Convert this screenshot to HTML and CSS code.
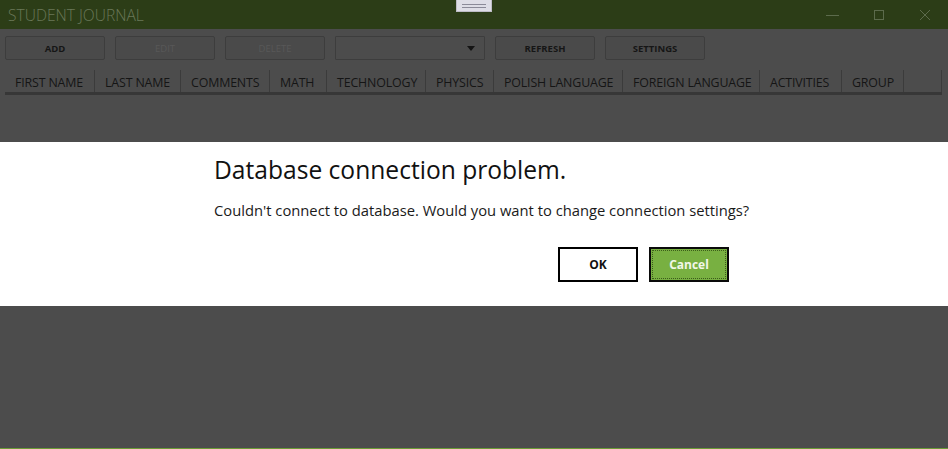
FILE: index.html
```html
<!DOCTYPE html>
<html>
<head>
<meta charset="utf-8">
<link rel="stylesheet" href="styles.css">
</head>
<body>
<div class="app">
  <div class="titlebar">
    <span class="title">STUDENT JOURNAL</span>
    <div class="controls">
      <span class="ctl"><svg width="14" height="10" viewBox="0 0 14 10"><line x1="0" y1="5.5" x2="13" y2="5.5" stroke="#5c6b4c" stroke-width="1"/></svg></span>
      <span class="ctl"><svg width="12" height="12" viewBox="0 0 12 12"><rect x="1.5" y="1.5" width="9" height="9" fill="none" stroke="#5c6b4c" stroke-width="1"/></svg></span>
      <span class="ctl"><svg width="12" height="12" viewBox="0 0 12 12"><path d="M1 1L11 11M11 1L1 11" stroke="#5c6b4c" stroke-width="1"/></svg></span>
    </div>
  </div>
  <div class="grip"><span></span><span></span></div>
  <div class="toolbar">
    <button class="btn">ADD</button>
    <button class="btn disabled">EDIT</button>
    <button class="btn disabled">DELETE</button>
    <div class="combo"><svg width="8" height="5" viewBox="0 0 8 5"><path d="M0 0H8L4 5Z" fill="#141414"/></svg></div>
    <button class="btn">REFRESH</button>
    <button class="btn">SETTINGS</button>
  </div>
  <div class="header">
    <div class="cell">FIRST NAME</div>
    <div class="cell">LAST NAME</div>
    <div class="cell">COMMENTS</div>
    <div class="cell">MATH</div>
    <div class="cell">TECHNOLOGY</div>
    <div class="cell">PHYSICS</div>
    <div class="cell">POLISH LANGUAGE</div>
    <div class="cell">FOREIGN LANGUAGE</div>
    <div class="cell">ACTIVITIES</div>
    <div class="cell">GROUP</div>
    <div class="cell"></div>
  </div>
  <div class="content"></div>
  <div class="statusline"></div>
</div>
<div class="dialog">
  <h1 class="dlg-title">Database connection problem.</h1>
  <p class="dlg-msg">Couldn't connect to database. Would you want to change connection settings?</p>
  <div class="dlg-buttons">
    <button class="dbtn ok">OK</button>
    <button class="dbtn cancel"><span>Cancel</span></button>
  </div>
</div>
</body>
</html>
```
FILE: styles.css
```css
* { box-sizing: border-box; }
html, body { margin: 0; padding: 0; }
body {
  width: 948px;
  height: 449px;
  overflow: hidden;
  background: #4c4c4c;
  font-family: "Open Sans", "Noto Sans", sans-serif;
  position: relative;
}
.app {
  display: flex;
  flex-direction: column;
  height: 449px;
}
.titlebar {
  height: 29px;
  background: #2c3d17;
  display: flex;
  align-items: center;
  justify-content: space-between;
  padding-left: 8px;
  flex: none;
}
.title {
  color: #6a7859;
  font-size: 15.6px;
  font-weight: 300;
}
.controls {
  display: flex;
  height: 29px;
}
.ctl {
  width: 46px;
  height: 29px;
  display: flex;
  align-items: center;
  justify-content: center;
}
.grip {
  position: absolute;
  left: 456px;
  top: 0;
  width: 36px;
  height: 12px;
  background: #dedde6;
  border: 1px solid #bdbcc6;
  border-top: none;
  display: flex;
  flex-direction: column;
  align-items: center;
  justify-content: center;
  gap: 2px;
}
.grip span {
  display: block;
  width: 24px;
  height: 1px;
  background: #8b8a98;
}
.toolbar {
  display: flex;
  gap: 10px;
  padding: 7px 0 0 5px;
  height: 31px;
  flex: none;
}
.btn {
  width: 100px;
  height: 24px;
  background: #4a4a4a;
  border: 1px solid #3d3d3d;
  border-radius: 2px;
  font-family: "Open Sans", sans-serif;
  font-size: 9.5px;
  font-weight: 700;
  color: #161616;
  padding: 0;
}
.btn.disabled { color: #585858; font-weight: 400; }
.combo {
  width: 150px;
  height: 24px;
  border: 1px solid #3d3d3d;
  border-radius: 1px;
  display: flex;
  align-items: center;
  justify-content: flex-end;
  padding-right: 9px;
}
.header {
  display: grid;
  grid-template-columns: 90px 86px 89px 57px 99px 68px 129px 137px 82px 62px 38px;
  margin: 10px 0 0 5px;
  height: 25px;
  border-bottom: 3px solid #373737;
  width: 937px;
  flex: none;
}
.cell {
  border-right: 1px solid #3b3b3b;
  font-size: 12.4px;
  color: #151515;
  padding: 4px 0 0 10px;
  white-space: nowrap;
  letter-spacing: -0.15px;
}
.content { flex: 1; }
.statusline { height: 1px; background: #6a9b35; flex: none; }
.dialog {
  position: absolute;
  left: 0;
  top: 142px;
  width: 948px;
  height: 164px;
  background: #ffffff;
  padding: 12px 219px 0 214px;
  display: flex;
  flex-direction: column;
}
.dlg-title {
  margin: 0;
  font-size: 24.6px;
  font-weight: 400;
  color: #111111;
  line-height: 32px;
  white-space: nowrap;
}
.dlg-msg {
  margin: 14px 0 0 0;
  font-size: 14.75px;
  color: #1a1a1a;
  line-height: 20px;
  white-space: nowrap;
}
.dlg-buttons {
  display: flex;
  justify-content: flex-end;
  gap: 11px;
  margin-top: 27px;
}
.dbtn {
  width: 80px;
  height: 35px;
  flex: none;
  font-family: "Open Sans", sans-serif;
  font-size: 12px;
  font-weight: 700;
  padding: 0;
}
.ok {
  background: #ffffff;
  border: 2px solid #000000;
  color: #111111;
}
.cancel {
  background: #78b041;
  border: 2px solid #0a0a0a;
  color: #f2f7e8;
  padding: 1px;
}
.cancel span {
  display: flex;
  align-items: center;
  justify-content: center;
  width: 100%;
  height: 100%;
  border: 1px dotted #3c5c1a;
}
```
